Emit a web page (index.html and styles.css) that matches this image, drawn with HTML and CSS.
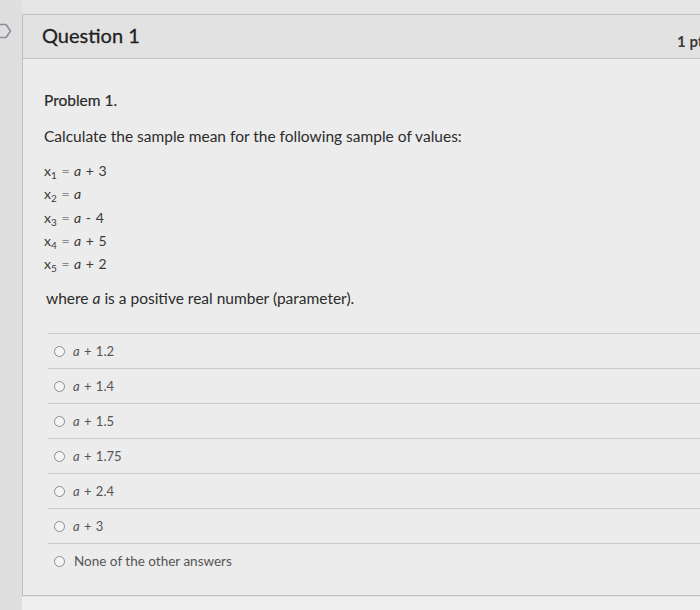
FILE: index.html
```html
<!DOCTYPE html>
<html lang="en">
<head>
<meta charset="utf-8">
<title>Question 1</title>
<link rel="stylesheet" href="styles.css">
</head>
<body>
<div class="page">
  <div class="gutter">
    <svg class="flag" width="12" height="16" viewBox="0 0 12 16" aria-hidden="true">
      <path d="M-4 1.5 H6 L10.5 8 L6 14.5 H-4" fill="none" stroke="#8c8f9c" stroke-width="1.6" stroke-linejoin="round"/>
    </svg>
  </div>
  <section class="question">
    <header class="q-header">
      <h2 class="q-title">Question 1</h2>
      <span class="q-points">1 pts</span>
    </header>
    <div class="q-body">
      <p class="problem">Problem 1.</p>
      <p class="prompt">Calculate the sample mean for the following sample of values:</p>
      <div class="values">
        <div class="val">x<sub>1</sub> <span class="eq">=</span> <i>a</i> + 3</div>
        <div class="val">x<sub>2</sub> <span class="eq">=</span> <i>a</i></div>
        <div class="val">x<sub>3</sub> <span class="eq">=</span> <i>a</i> - 4</div>
        <div class="val">x<sub>4</sub> <span class="eq">=</span> <i>a</i> + 5</div>
        <div class="val">x<sub>5</sub> <span class="eq">=</span> <i>a</i> + 2</div>
      </div>
      <p class="where">where <i>a</i> is a positive real number (parameter).</p>
      <ul class="answers">
        <li class="answer"><span class="radio"></span><span class="label"><i>a</i> + 1.2</span></li>
        <li class="answer"><span class="radio"></span><span class="label"><i>a</i> + 1.4</span></li>
        <li class="answer"><span class="radio"></span><span class="label"><i>a</i> + 1.5</span></li>
        <li class="answer"><span class="radio"></span><span class="label"><i>a</i> + 1.75</span></li>
        <li class="answer"><span class="radio"></span><span class="label"><i>a</i> + 2.4</span></li>
        <li class="answer"><span class="radio"></span><span class="label"><i>a</i> + 3</span></li>
        <li class="answer"><span class="radio"></span><span class="label text">None of the other answers</span></li>
      </ul>
    </div>
  </section>
</div>
</body>
</html>
```

FILE: styles.css
```css
html, body {
  margin: 0;
  padding: 0;
  overflow: hidden;
  width: 700px;
  height: 610px;
}

body {
  background: #ececec;
  font-family: Lato, "Open Sans", sans-serif;
  color: #2f2f2f;
}

.page {
  display: flex;
  align-items: flex-start;
  width: 760px;
  height: 610px;
  background: linear-gradient(#e6e6e6, #e6e6e6 597px, #efefef 597px);
}

.gutter {
  width: 22px;
  flex: none;
  align-self: stretch;
  background: #dfdfdf;
  padding-top: 23px;
  box-sizing: border-box;
}

.flag {
  display: block;
}

.question {
  flex: none;
  width: 709px;
  margin-top: 14px;
  border: 1px solid #bfbfbf;
  background: #ececec;
  box-sizing: border-box;
}

.q-header {
  display: flex;
  align-items: center;
  justify-content: space-between;
  height: 43px;
  padding: 0 20px 0 19px;
  background: #e2e2e2;
  border-bottom: 1px solid #c2c2c2;
  box-sizing: content-box;
}

.q-title {
  margin: 0;
  font-size: 20px;
  font-weight: 400;
  color: #1f1f1f;
  line-height: 24px;
  padding-bottom: 3px;
  -webkit-text-stroke: 0.3px #1f1f1f;
}

.q-points {
  font-size: 15px;
  font-weight: 700;
  color: #3a3a3a;
  padding-top: 8px;
}

.q-body {
  padding: 29px 0 17px 21px;
}

.problem,
.prompt,
.where {
  margin: 0;
  font-size: 15.5px;
  line-height: 24px;
  color: #2b2b2b;
}

.problem {
  -webkit-text-stroke: 0.2px #2b2b2b;
}

.prompt {
  margin-top: 12px;
}

.values {
  margin-top: 11px;
  font-size: 14px;
  line-height: 23.3px;
  color: #3a3a3a;
  word-spacing: 1px;
}

.val sub {
  font-size: 10px;
  vertical-align: -3px;
  line-height: 0;
}

.val .eq {
  color: #8a8a8a;
}

.where {
  margin-top: 11px;
  padding-left: 2px;
}

.answers {
  list-style: none;
  margin: 23px 0 0 4px;
  padding: 0;
}

.answer {
  display: flex;
  align-items: center;
  gap: 8px;
  height: 34px;
  border-top: 1px solid #c9c9c9;
  padding-left: 6px;
}

.radio {
  width: 11px;
  height: 11px;
  border: 1px solid #8d8d8d;
  border-radius: 50%;
  background: #f4f4f4;
  box-sizing: border-box;
  flex: none;
}

.label {
  font-size: 13px;
  color: #555;
  word-spacing: 1px;
}

.label.text {
  font-size: 13.5px;
  word-spacing: 0;
  padding-left: 1px;
}
```
